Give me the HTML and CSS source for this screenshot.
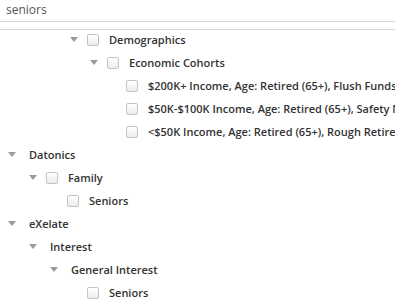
FILE: index.html
```html
<!DOCTYPE html>
<html lang="en">
<head>
    <meta charset="UTF-8">
    <meta name="viewport" content="width=device-width, initial-scale=1.0">
    <title>Segment tree</title>
    <link rel="stylesheet" href="styles.css">
</head>
<body>
    <div class="search">
        <input class="search-input" type="text" value="seniors">
    </div>

    <ul class="tree">
        <li class="node lvl-3"><span class="toggle"></span><span class="cb"></span><span class="label">Demographics</span></li>
        <li class="node lvl-4"><span class="toggle"></span><span class="cb"></span><span class="label">Economic Cohorts</span></li>
        <li class="node lvl-5"><span class="toggle empty"></span><span class="cb"></span><span class="label">$200K+ Income, Age: Retired (65+), Flush Funds</span></li>
        <li class="node lvl-5"><span class="toggle empty"></span><span class="cb"></span><span class="label">$50K-$100K Income, Age: Retired (65+), Safety Net</span></li>
        <li class="node lvl-5"><span class="toggle empty"></span><span class="cb"></span><span class="label">&lt;$50K Income, Age: Retired (65+), Rough Retirement</span></li>
        <li class="node lvl-0"><span class="toggle"></span><span class="label no-cb">Datonics</span></li>
        <li class="node lvl-1"><span class="toggle"></span><span class="cb"></span><span class="label">Family</span></li>
        <li class="node lvl-2"><span class="toggle empty"></span><span class="cb"></span><span class="label">Seniors</span></li>
        <li class="node lvl-0"><span class="toggle"></span><span class="label no-cb">eXelate</span></li>
        <li class="node lvl-1"><span class="toggle"></span><span class="label no-cb">Interest</span></li>
        <li class="node lvl-2"><span class="toggle"></span><span class="label no-cb">General Interest</span></li>
        <li class="node lvl-3"><span class="toggle empty"></span><span class="cb"></span><span class="label">Seniors</span></li>
    </ul>
</body>
</html>
```

FILE: styles.css
```css
body {
    margin: 0;
    font-family: "Open Sans", Arial, sans-serif;
    font-size: 12px;
    color: #333;
    background: #fff;
    overflow: hidden;
}
.search {
    padding-bottom: 7px;
}
.search-input {
    display: block;
    box-sizing: border-box;
    width: 100%;
    height: 22px;
    margin: 0;
    padding: 0 6px 3px;
    border: none;
    border-bottom: 1px solid #d6d6d6;
    font-family: inherit;
    font-size: 12px;
    color: #555;
    outline: none;
}
.tree {
    list-style: none;
    margin: 0;
    padding: 0;
    border-top: 1px solid #d6d6d6;
}
.node {
    display: flex;
    align-items: center;
    height: 23px;
    white-space: nowrap;
    overflow: hidden;
}
.node:first-child {
    margin-top: -2px;
}
.lvl-0 { padding-left: 8px; }
.lvl-1 { padding-left: 29px; }
.lvl-2 { padding-left: 50px; }
.lvl-3 { padding-left: 70px; }
.lvl-4 { padding-left: 90px; }
.lvl-5 { padding-left: 109px; }
.toggle {
    flex: none;
    width: 17px;
    height: 5px;
    position: relative;
}
.toggle::before {
    content: "";
    position: absolute;
    left: 0;
    top: 0;
    border-left: 4px solid transparent;
    border-right: 4px solid transparent;
    border-top: 5px solid #9a9a9a;
}
.toggle.empty::before {
    display: none;
}
.cb {
    flex: none;
    box-sizing: border-box;
    width: 12px;
    height: 12px;
    margin-right: 10px;
    border: 1px solid #c4c4c4;
    border-radius: 2px;
    background: linear-gradient(#fff, #ececec);
}
.label {
    font-size: 11px;
    font-weight: 600;
    line-height: 23px;
}
.label.no-cb {
    margin-left: 4px;
}
```
